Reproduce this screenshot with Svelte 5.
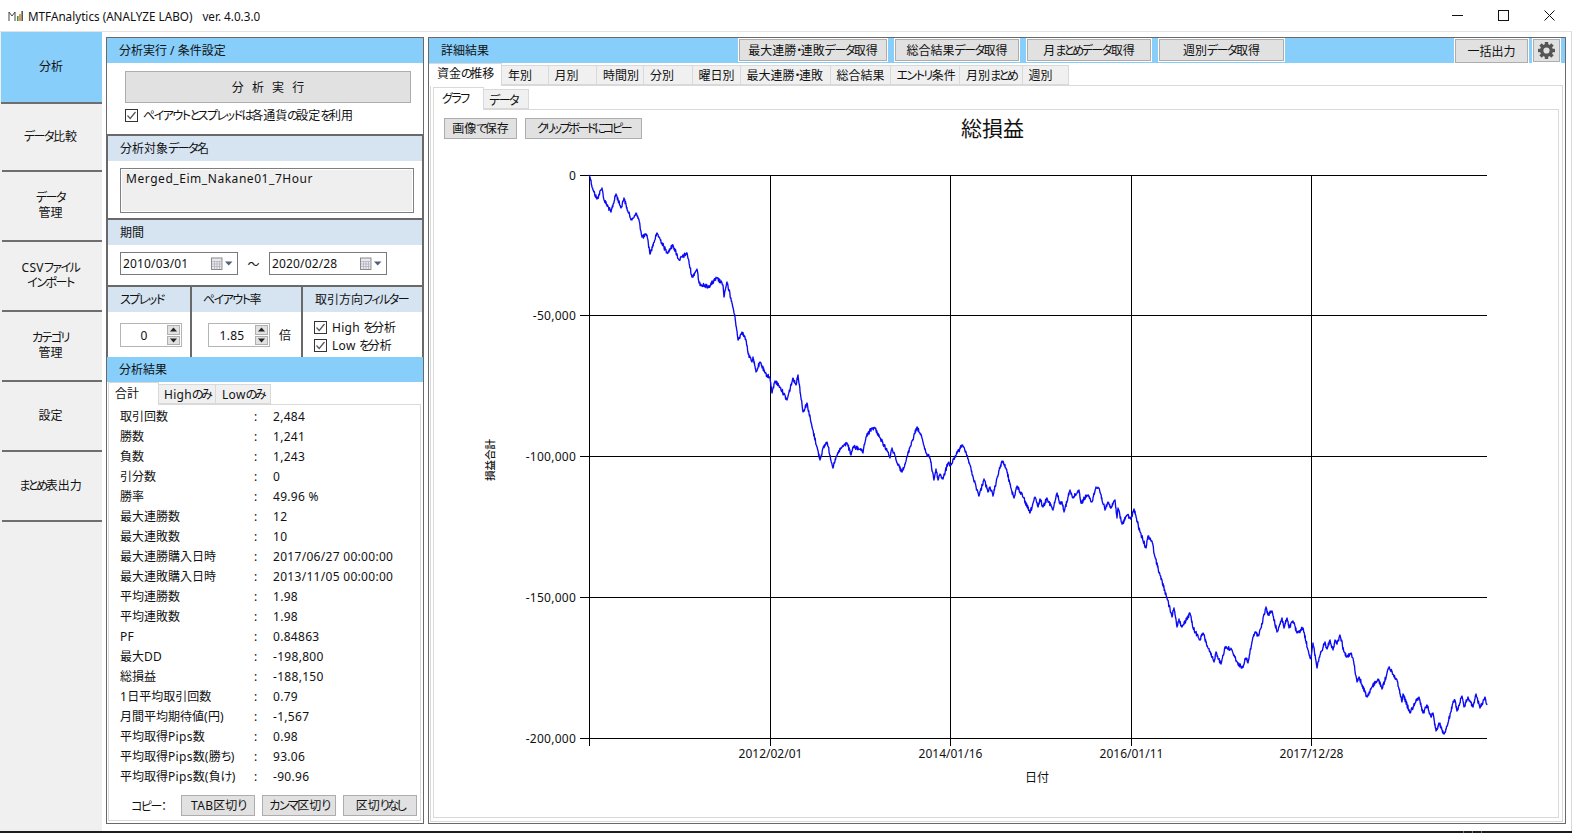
<script>
  const nav = [
    { lines: ['分析'], h: 72, active: true },
    { lines: ['データ比較'], h: 68 },
    { lines: ['データ', '管理'], h: 70 },
    { lines: ['CSVファイル', 'インポート'], h: 70 },
    { lines: ['カテゴリ', '管理'], h: 70 },
    { lines: ['設定'], h: 70 },
    { lines: ['まとめ表出力'], h: 70 }
  ];
  const rows = [
    ['取引回数', '2,484'], ['勝数', '1,241'], ['負数', '1,243'], ['引分数', '0'], ['勝率', '49.96 %'],
    ['最大連勝数', '12'], ['最大連敗数', '10'], ['最大連勝購入日時', '2017/06/27 00:00:00'],
    ['最大連敗購入日時', '2013/11/05 00:00:00'], ['平均連勝数', '1.98'], ['平均連敗数', '1.98'],
    ['PF', '0.84863'], ['最大DD', '-198,800'], ['総損益', '-188,150'], ['1日平均取引回数', '0.79'],
    ['月間平均期待値(円)', '-1,567'], ['平均取得Pips数', '0.98'], ['平均取得Pips数(勝ち)', '93.06'],
    ['平均取得Pips数(負け)', '-90.96']
  ];
  const topTabs = [
    ['資金の推移', 73], ['年別', 46.5], ['月別', 48.5], ['時間別', 47], ['分別', 48.5], ['曜日別', 48],
    ['最大連勝・連敗', 90], ['総合結果', 60], ['エントリ条件', 69.5], ['月別まとめ', 62.5], ['週別', 46]
  ];
  const getters = [['最大連勝・連敗データ取得', 148], ['総合結果データ取得', 124], ['月まとめデータ取得', 124], ['週別データ取得', 125]];

  const yGrid = [[175.5, '0'], [315.5, '-50,000'], [456.5, '-100,000'], [597.5, '-150,000'], [738.5, '-200,000']];
  const xGrid = [[589.5, ''], [770.5, '2012/02/01'], [950.5, '2014/01/16'], [1131.5, '2016/01/11'], [1311.5, '2017/12/28']];

  const runRe = /[\u3041-\u309f]+|[\u30a0-\u30ff]+|[\x20-\x7e]+|[^\u3041-\u30ff\x20-\x7e]+/g;
  function runs(text) {
    return (text.match(runRe) || []).map((r) => {
      const c = r.charCodeAt(0);
      const cls = c >= 0x3041 && c <= 0x309f ? 'h' : c >= 0x30a0 && c <= 0x30ff ? 'k' : c <= 0x7e ? 'l' : 'z';
      return { r, cls };
    });
  }

  const k = [
    589,175, 590,177, 593,190, 597,199, 602,188, 604,200, 611,212, 616,194, 621,208, 624,198, 628,212, 632,220, 636,213, 639,220,
    642,237, 647,235, 650,254, 657,233, 667,253, 673,245, 679,260, 687,253, 692,277, 697,269, 699,283, 708,287, 717,278, 723,285,
    724,297, 727,282, 732,303, 735,317, 738,340, 742,332, 746,340, 748,353, 752,362, 753,357, 756,372, 760,362, 765,373, 770,378,
    772,393, 775,381, 780,387, 787,400, 793,378, 796,385, 798,375, 803,412, 807,403, 812,427, 817,447, 820,460, 823,448, 827,442,
    833,468, 837,455, 842,447, 847,443, 851,455, 853,447, 860,449, 863,453, 866,437, 872,428, 875,428, 880,438, 888,452, 890,458,
    892,448, 897,463, 902,472, 907,457, 910,447, 917,427, 922,438, 926,453, 930,458, 934,480, 936,469, 938,480, 940,474, 943,479,
    948,463, 951,465, 955,457, 962,445, 966,452, 970,465, 973,477, 979,496, 984,479, 988,492, 990,487, 993,496, 997,478, 1002,461,
    1006,468, 1011,488, 1014,498, 1017,486, 1023,497, 1030,513, 1035,497, 1038,507, 1040,499, 1043,507, 1047,498, 1053,510, 1057,493,
    1060,504, 1062,502, 1064,512, 1070,490, 1073,498, 1079,490, 1081,503, 1087,495, 1092,502, 1096,487, 1099,488, 1105,510, 1108,502,
    1111,508, 1115,500, 1117,518, 1118,508, 1122,524, 1127,515, 1131,519, 1134,509, 1140,532, 1146,548, 1148,536, 1152,541, 1155,557,
    1160,575, 1167,598, 1172,617, 1174,608, 1177,627, 1179,619, 1182,627, 1190,613, 1193,628, 1200,640, 1203,633, 1208,648, 1214,662,
    1216,652, 1221,664, 1225,647, 1232,650, 1237,662, 1242,668, 1246,658, 1248,663, 1253,637, 1256,632, 1258,636, 1261,628, 1266,607,
    1268,615, 1272,611, 1277,632, 1282,618, 1284,628, 1287,618, 1289,628, 1293,621, 1297,633, 1303,628, 1308,650, 1311,659, 1313,643,
    1317,668, 1320,655, 1325,642, 1327,649, 1330,640, 1333,650, 1335,640, 1337,644, 1340,635, 1344,652, 1347,657, 1351,653, 1353,658,
    1357,682, 1359,677, 1367,697, 1372,687, 1378,679, 1382,689, 1389,667, 1397,680, 1402,702, 1403,694, 1410,713, 1415,703, 1419,697,
    1423,713, 1427,705, 1431,717, 1433,713, 1436,731, 1439,723, 1444,734, 1448,723, 1453,702, 1455,700, 1457,711, 1462,696, 1464,707,
    1468,697, 1473,707, 1476,694, 1480,708, 1485,697, 1487,705
  ];
  function buildCurve() {
    let s = 12345;
    const rnd = () => { s = (s * 1103515245 + 12345) & 0x7fffffff; return (s >> 8) / 0x7fffff - 0.5; };
    const pts = [];
    for (let i = 0; i < k.length - 2; i += 2) {
      const [x0, y0, x1, y1] = [k[i], k[i + 1], k[i + 2], k[i + 3]];
      const n = Math.max(1, Math.round((x1 - x0) / 0.35));
      for (let j = 0; j < n; j++) {
        const t = j / n;
        const edge = Math.min(1, Math.min(j, n - j) / 3);
        pts.push((x0 + (x1 - x0) * t).toFixed(2) + ',' + (y0 + (y1 - y0) * t + rnd() * 4.2 * edge).toFixed(2));
      }
    }
    pts.push('1487,705');
    return pts.join(' ');
  }
  const curve = buildCurve();
  const teeth = [0, 45, 90, 135, 180, 225, 270, 315];
</script>

{#snippet t(text)}{#each runs(text) as p}<span class={p.cls}>{p.r}</span>{/each}{/snippet}

{#snippet check(text)}
  <label class="check">
    <svg class="box" width="13" height="13" viewBox="0 0 13 13">
      <rect x="0.5" y="0.5" width="12" height="12" fill="#fff" stroke="#333" />
      <path d="M2.5 6.5 L5.2 9.5 L10.5 3" fill="none" stroke="#555" stroke-width="1.2" />
    </svg>
    <span>{@render t(text)}</span>
  </label>
{/snippet}

{#snippet date(value)}
  <div class="date">
    <span>{value}</span>
    <svg width="22" height="14" viewBox="0 0 22 14">
      <rect x="0.5" y="1" width="10.5" height="11.5" fill="#e8e8ee" stroke="#8a8a8a" />
      <path d="M1 4.5H10.5M1 7H10.5M1 9.5H10.5M3.5 4V12M6 4V12M8.5 4V12" stroke="#b4b4c0" stroke-width="0.8" />
      <rect x="11" y="3" width="1" height="10" fill="#ccc" />
      <path d="M14 4.5H21.5L17.7 8.5Z" fill="#50607f" />
    </svg>
  </div>
{/snippet}

{#snippet spin(value, cls)}
  <div class="spin {cls}">
    <span class="spin-val">{value}</span>
    <div class="spin-btns">
      <i><svg width="7" height="5" viewBox="0 0 7 5"><path d="M0 4.5H7L3.5 0.5Z" fill="#222" /></svg></i>
      <i><svg width="7" height="5" viewBox="0 0 7 5"><path d="M0 0.5H7L3.5 4.5Z" fill="#222" /></svg></i>
    </div>
  </div>
{/snippet}

<div class="win">
  <header class="titlebar">
    <svg class="logo" width="16" height="12" viewBox="0 0 16 12">
      <path d="M1 11V2L4 6L7 2V11" fill="none" stroke="#444" stroke-width="1" />
      <rect x="9" y="6" width="1.6" height="5" fill="#4f8a3c" />
      <rect x="11.2" y="4" width="1.6" height="7" fill="#c98a2c" />
      <rect x="13.4" y="1" width="1.6" height="10" fill="#555" />
    </svg>
    <span class="apptitle">MTFAnalytics (ANALYZE LABO)</span>
    <span class="appver">ver. 4.0.3.0</span>
    <div class="winbtns">
      <svg width="11" height="11" viewBox="0 0 11 11"><path d="M0 5.5H11" stroke="#111" /></svg>
      <svg width="11" height="11" viewBox="0 0 11 11"><rect x="0.5" y="0.5" width="10" height="10" fill="none" stroke="#111" /></svg>
      <svg width="11" height="11" viewBox="0 0 11 11"><path d="M0.5 0.5L10.5 10.5M10.5 0.5L0.5 10.5" stroke="#111" /></svg>
    </div>
  </header>

  <div class="work">
    <nav class="side">
      {#each nav as n}
        <button class="navbtn" class:active={n.active} style="height:{n.h}px">
          {#each n.lines as l}<span>{@render t(l)}</span>{/each}
        </button>
      {/each}
    </nav>

    <section class="left">
      <div class="bluehead">分析実行 / 条件設定</div>
      <div class="exec">
        <button class="btn runbtn">分 析 実 行</button>
        {@render check('ペイアウトとスプレッドは各通貨の設定を利用')}
      </div>

      <div class="sec sec-name">
        <div class="subhead">{@render t('分析対象データ名')}</div>
        <div class="namebox">Merged_Eim_Nakane01_7Hour</div>
      </div>

      <div class="sec sec-period">
        <div class="subhead">期間</div>
        <div class="period">
          {@render date('2010/03/01')}
          <span class="tilde">～</span>
          {@render date('2020/02/28')}
        </div>
      </div>

      <div class="sec sec-three">
        <div class="col c1">
          <div class="subhead">{@render t('スプレッド')}</div>
          <div class="colbody">{@render spin('0', 's1')}</div>
        </div>
        <div class="col c2">
          <div class="subhead">{@render t('ペイアウト率')}</div>
          <div class="colbody">{@render spin('1.85', 's2')}<span class="bai">倍</span></div>
        </div>
        <div class="col c3">
          <div class="subhead">{@render t('取引方向フィルター')}</div>
          <div class="filters">
            {@render check('High を分析')}
            {@render check('Low を分析')}
          </div>
        </div>
      </div>

      <div class="bluehead res">分析結果</div>
      <div class="rtabs">
        <div class="rtab on">合計</div>
        <div class="rtab t2">{@render t('Highのみ')}</div>
        <div class="rtab t3">{@render t('Lowのみ')}</div>
      </div>
      <div class="rframe">
        <div class="list">
          {#each rows as r}
            <div class="row"><span>{@render t(r[0])}</span><span>:</span><span>{@render t(r[1])}</span></div>
          {/each}
        </div>
        <div class="copy">
          <span class="copylabel">{@render t('コピー')}：</span>
          <button class="btn cbtn">{@render t('TAB区切り')}</button>
          <button class="btn cbtn">{@render t('カンマ区切り')}</button>
          <button class="btn cbtn">{@render t('区切りなし')}</button>
        </div>
      </div>
    </section>

    <section class="right">
      <div class="rhead">
        <span class="rtitle">詳細結果</span>
        <div class="getters">
          {#each getters as g}
            <button class="btn ringed" style="width:{g[1]}px">{@render t(g[0])}</button>
          {/each}
        </div>
        <button class="btn ringed all">一括出力</button>
        <button class="btn ringed gear" aria-label="設定">
          <svg width="17" height="17" viewBox="-8.5 -8.5 17 17">
            <circle r="4.8" fill="none" stroke="#555" stroke-width="3.4" />
            {#each teeth as a}
              <rect x="-1.7" y="-8.5" width="3.4" height="3.4" fill="#555" transform="rotate({a})" />
            {/each}
          </svg>
        </button>
      </div>
      <div class="tabs">
        {#each topTabs as tb, i}
          <div class="tab" class:on={i === 0} style="width:{tb[1]}px">{@render t(tb[0])}</div>
        {/each}
      </div>
      <div class="outer">
        <div class="subtabs">
          <div class="stab on">{@render t('グラフ')}</div>
          <div class="stab">{@render t('データ')}</div>
        </div>
        <div class="inner">
          <div class="tools">
            <button class="btn tool t-a">{@render t('画像で保存')}</button>
            <button class="btn tool t-b">{@render t('クリップボードにコピー')}</button>
          </div>
          <svg class="chart" width="1125" height="708" viewBox="434 110 1125 708">
            <text x="992.5" y="136" class="ct" text-anchor="middle">総損益</text>
            {#each yGrid as g}
              <line x1="580" x2="1487" y1={g[0]} y2={g[0]} stroke="#000" />
              <text x="576" y={g[0] + 4} class="al yl" text-anchor="end">{g[1]}</text>
            {/each}
            {#each xGrid as g}
              <line x1={g[0]} x2={g[0]} y1="175" y2="746" stroke="#000" />
              <text x={g[0]} y="758" class="al" text-anchor="middle">{g[1]}</text>
            {/each}
            <text x="1037" y="782" class="al" text-anchor="middle">日付</text>
            <text transform="translate(494 460) rotate(-90)" class="al yt" text-anchor="middle">損益合計</text>
            <polyline points={curve} fill="none" stroke="#0a0af5" stroke-width="1.35" stroke-linejoin="round" />
          </svg>
        </div>
      </div>
    </section>
  </div>
  <footer class="taskbar"><i></i><i></i><i></i></footer>
</div>

<style>
  :global(body) { margin: 0; background: #fff; }
  .win {
    width: 1572px; height: 833px; overflow: hidden; display: flex; flex-direction: column;
    font-family: "Noto Sans", "Noto Sans CJK JP", sans-serif; font-size: 12px; color: #111;
    font-feature-settings: "palt"; background: #fff;
  }
  .h { letter-spacing: var(--hira, -2.4px); }
  .k { letter-spacing: var(--kata, -1.5px); }
  .l { letter-spacing: var(--lat, 0.3px); }
  button { font: inherit; color: inherit; font-feature-settings: inherit; padding: 0; }
  .titlebar { height: 31px; display: flex; align-items: center; flex: none; position: relative; }
  .logo { margin-left: 8px; margin-right: 4px; }
  .apptitle { font-size: 11.7px; white-space: nowrap; }
  .appver { margin-left: 10px; font-size: 11.7px; }
  .winbtns { margin-left: auto; display: flex; gap: 35px; margin-right: 17px; }
  .winbtns svg { display: block; }

  .work { flex: 1; min-height: 0; display: flex; border-top: 1px solid #e3e3e3; border-right: 1px solid #d9d9d9; box-sizing: border-box; }
  .side { width: 102px; flex: none; background: #f0f0f0; display: flex; flex-direction: column; align-items: flex-end; }
  .navbtn {
    box-sizing: border-box; width: 100px; border: 0; border-bottom: 2px solid #6e6e6e; background: #f0f0f0;
    display: flex; flex-direction: column; align-items: center; justify-content: center; line-height: 15px;
    padding: 0 3px 2px 0; flex: none;
  }
  .navbtn.active { width: 101px; background: #87cefa; padding-right: 1px; }

  .left {
    box-sizing: border-box; width: 318px; height: 787px; margin: 5px 0 0 4px; flex: none;
    border: 1px solid #696969; display: flex; flex-direction: column;
  }
  .bluehead { height: 25px; flex: none; background: #87cefa; line-height: 25px; padding-left: 12px; }
  .exec { height: 71px; flex: none; box-sizing: border-box; padding: 8px 12px 0 17px; }
  .btn { background: #e1e1e1; border: 1px solid #adadad; box-sizing: border-box; white-space: nowrap; }
  .runbtn { display: block; width: 286px; height: 32px; margin-left: 1px; border-width: 1.5px; word-spacing: 5px; }
  .check { display: flex; align-items: center; gap: 5px; white-space: nowrap; height: 18px; }
  .box { display: block; flex: none; }
  .exec .check { margin-top: 3px; margin-left: 1px; }

  .sec { flex: none; border-top: 2px solid #696969; border-left: 1px solid #696969; border-right: 1px solid #696969; box-sizing: border-box; }
  .subhead { height: 25px; line-height: 25px; background: #d6e4f2; padding-left: 12px; white-space: nowrap; }
  .sec-name { height: 84px; }
  .namebox {
    box-sizing: border-box; width: 294px; height: 45px; margin: 7px 0 0 12px; background: #efefef;
    border: 1px solid #7f7f7f; box-shadow: inset 0 0 0 1px #fff; padding: 2px 0 0 5px; letter-spacing: 0.55px; line-height: 16px;
  }
  .sec-period { height: 67px; }
  .period { display: flex; align-items: center; margin: 7px 0 0 12px; }
  .date {
    box-sizing: border-box; width: 118px; height: 23px; border: 1px solid #7a7a7a; display: flex; align-items: center;
    justify-content: space-between; padding: 0 4px 0 2px; letter-spacing: 0.15px;
  }
  .date svg { display: block; }
  .tilde { width: 31px; text-align: center; }

  .sec-three { height: 72px; display: flex; border-bottom: 0; }
  .col { box-sizing: border-box; height: 70px; }
  .c1 { width: 82px; }
  .c2 { width: 111px; border-left: 2px solid #696969; }
  .c3 { flex: 1; border-left: 2px solid #696969; }
  .c2 .subhead { padding-left: 11px; }
  .colbody { display: flex; align-items: center; padding-top: 11px; }
  .spin {
    box-sizing: border-box; height: 24px; width: 62px; border: 1px solid #b5b5b5; display: flex; align-items: center;
    justify-content: space-between; padding-right: 1px;
  }
  .s1 { margin-left: 12px; }
  .s2 { margin-left: 16px; }
  .spin-val { flex: 1; text-align: center; letter-spacing: 0.3px; }
  .spin-btns { display: flex; flex-direction: column; gap: 1px; }
  .spin-btns i { display: flex; align-items: center; justify-content: center; width: 13px; height: 9.5px; background: #e1e1e1; border: 1px solid #b0b0b0; box-sizing: border-box; }
  .spin-btns svg { display: block; }
  .bai { margin-left: 9px; }
  .filters { padding: 6px 0 0 11px; }
  .filters .check { height: 18px; }

  .res { margin-top: 0; }
  .rtabs { height: 22px; flex: none; display: flex; align-items: flex-end; position: relative; z-index: 1; padding-left: 1px; }
  .rtab { box-sizing: border-box; height: 20px; line-height: 20px; background: #f0f0f0; border: 1px solid #d9d9d9; border-left: 0; padding-left: 5px; }
  .rtab.on { width: 51px; height: 23px; line-height: 21px; background: #fff; border-bottom: 0; border-left: 1px solid #d9d9d9; padding-left: 6px; margin-bottom: -1px; }
  .t2 { width: 57px; margin-left: 0; padding-left: 5px; }
  .t3 { width: 55px; padding-left: 6px; }
  .rframe { box-sizing: border-box; flex: 1; margin: 0 2px 2px 1px; border: 1px solid #d9d9d9; }
  .list { padding: 2px 0 0 11px; --hira: -0.5px; }
  .row { display: grid; grid-template-columns: 134px 19px 1fr; height: 20px; line-height: 20px; white-space: nowrap; }
  .copy { display: flex; align-items: center; margin-top: 8px; padding-left: 22px; height: 21px; --hira: -2.4px; }
  .copylabel { width: 50px; flex: none; }
  .cbtn { width: 74px; height: 21px; margin-right: 7px; line-height: 18px; flex: none; }

  .right { box-sizing: border-box; width: 1138px; height: 787px; margin: 5px 0 0 4px; flex: none; border: 1px solid #696969; display: flex; flex-direction: column; }
  .rhead { height: 25px; flex: none; background: #87cefa; display: flex; align-items: flex-start; }
  .rtitle { width: 310px; flex: none; box-sizing: border-box; padding-left: 12px; line-height: 25px; }
  .getters { display: flex; gap: 8px; }
  .ringed { height: 22px; box-shadow: 0 0 0 1px #fff; margin-top: 1px; }
  .all { margin-left: auto; width: 73px; height: 24px; }
  .gear { width: 27px; height: 23px; margin-left: 5px; margin-right: 5px; display: flex; align-items: center; justify-content: center; }
  .gear svg { display: block; }

  .tabs { height: 22px; flex: none; display: flex; align-items: flex-end; position: relative; z-index: 1; }
  .tab { box-sizing: border-box; height: 20px; line-height: 20px; background: #f0f0f0; border: 1px solid #d9d9d9; border-left: 0; padding-left: 6px; white-space: nowrap; flex: none; }
  .tab.on { height: 23px; background: #fff; border-bottom: 0; padding-left: 8px; line-height: 19px; margin-bottom: -1px; border-left: 0; }

  .outer { box-sizing: border-box; flex: 1; margin: 0 2px 1px 1px; border: 1px solid #d9d9d9; display: flex; flex-direction: column; padding: 0 3px 3px 2px; }
  .subtabs { height: 23px; flex: none; display: flex; align-items: flex-end; position: relative; z-index: 1; }
  .stab { box-sizing: border-box; width: 45px; height: 20px; line-height: 21px; background: #f0f0f0; border: 1px solid #d9d9d9; border-left: 0; padding-left: 5px; }
  .stab.on { width: 51px; height: 23px; background: #fff; border-bottom: 0; border-left: 1px solid #d9d9d9; padding-left: 8px; margin-bottom: -1px; }
  .inner { box-sizing: border-box; flex: 1; border: 1px solid #d9d9d9; position: relative; min-height: 0; }
  .chart { display: block; position: absolute; left: 0; top: 0; }
  .tools { position: absolute; left: 10px; top: 8px; display: flex; gap: 8px; z-index: 1; }
  .tool { height: 21px; line-height: 18px; }
  .t-a { width: 73px; }
  .t-b { width: 117px; --kata: -2.4px; --hira: -2.6px; }
  .ct { font-size: 21px; fill: #111; }
  .al { font-size: 12px; fill: #111; }
  .yl { letter-spacing: 0.25px; }
  .yt { font-size: 10.5px; font-weight: 500; }
  .taskbar { height: 2px; flex: none; background: #1c1c1c; display: flex; padding-left: 1463px; gap: 8px; }
  .taskbar i { width: 1px; height: 2px; background: #4d8a4d; }
</style>
